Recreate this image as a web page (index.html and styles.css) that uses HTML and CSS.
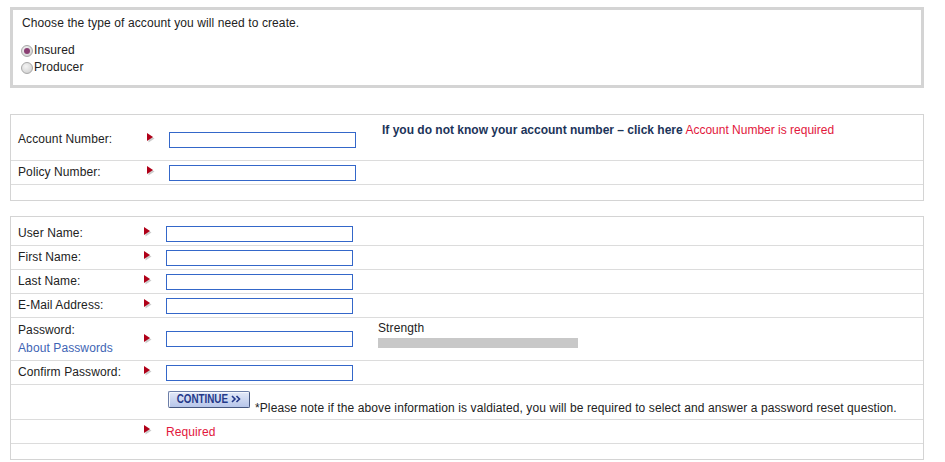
FILE: index.html
```html
<!DOCTYPE html>
<html>
<head>
<meta charset="utf-8">
<title>Create Account</title>
<link rel="stylesheet" href="styles.css">
</head>
<body>
<div class="page">
  <div class="type-box">
    <p class="prompt">Choose the type of account you will need to create.</p>
    <div class="radios">
      <label class="radio-row"><span class="radio checked"></span>Insured</label>
      <label class="radio-row"><span class="radio"></span>Producer</label>
    </div>
  </div>

  <div class="panel panel-account">
    <div class="row row-acct">
      <div class="label">Account Number:</div>
      <div class="req"><svg class="arrow" width="9" height="10" viewBox="0 0 9 10"><polygon points="1.5,1.5 7.5,5.5 1.5,9.5" fill="#cccccc"/><polygon points="0,0 6,4 0,8" fill="#b00018"/></svg></div>
      <div class="field"><input class="text-input" type="text"></div>
      <div class="hint"><b class="hint-strong">If you do not know your account number – click here</b> <span class="err">Account Number is required</span></div>
    </div>
    <div class="row">
      <div class="label">Policy Number:</div>
      <div class="req"><svg class="arrow" width="9" height="10" viewBox="0 0 9 10"><polygon points="1.5,1.5 7.5,5.5 1.5,9.5" fill="#cccccc"/><polygon points="0,0 6,4 0,8" fill="#b00018"/></svg></div>
      <div class="field"><input class="text-input" type="text"></div>
    </div>
    <div class="row row-empty"></div>
  </div>

  <div class="panel panel-user">
    <div class="row row-first">
      <div class="label">User Name:</div>
      <div class="req"><svg class="arrow" width="9" height="10" viewBox="0 0 9 10"><polygon points="1.5,1.5 7.5,5.5 1.5,9.5" fill="#cccccc"/><polygon points="0,0 6,4 0,8" fill="#b00018"/></svg></div>
      <div class="field"><input class="text-input" type="text"></div>
    </div>
    <div class="row">
      <div class="label">First Name:</div>
      <div class="req"><svg class="arrow" width="9" height="10" viewBox="0 0 9 10"><polygon points="1.5,1.5 7.5,5.5 1.5,9.5" fill="#cccccc"/><polygon points="0,0 6,4 0,8" fill="#b00018"/></svg></div>
      <div class="field"><input class="text-input" type="text"></div>
    </div>
    <div class="row">
      <div class="label">Last Name:</div>
      <div class="req"><svg class="arrow" width="9" height="10" viewBox="0 0 9 10"><polygon points="1.5,1.5 7.5,5.5 1.5,9.5" fill="#cccccc"/><polygon points="0,0 6,4 0,8" fill="#b00018"/></svg></div>
      <div class="field"><input class="text-input" type="text"></div>
    </div>
    <div class="row">
      <div class="label">E-Mail Address:</div>
      <div class="req"><svg class="arrow" width="9" height="10" viewBox="0 0 9 10"><polygon points="1.5,1.5 7.5,5.5 1.5,9.5" fill="#cccccc"/><polygon points="0,0 6,4 0,8" fill="#b00018"/></svg></div>
      <div class="field"><input class="text-input" type="text"></div>
    </div>
    <div class="row row-pass">
      <div class="label label-stack">
        <div class="label-line">Password:</div>
        <a class="about" href="#">About Passwords</a>
      </div>
      <div class="req"><svg class="arrow" width="9" height="10" viewBox="0 0 9 10"><polygon points="1.5,1.5 7.5,5.5 1.5,9.5" fill="#cccccc"/><polygon points="0,0 6,4 0,8" fill="#b00018"/></svg></div>
      <div class="field"><input class="text-input" type="password"></div>
      <div class="strength">
        <div class="strength-label">Strength</div>
        <div class="strength-bar"></div>
      </div>
    </div>
    <div class="row">
      <div class="label">Confirm Password:</div>
      <div class="req"><svg class="arrow" width="9" height="10" viewBox="0 0 9 10"><polygon points="1.5,1.5 7.5,5.5 1.5,9.5" fill="#cccccc"/><polygon points="0,0 6,4 0,8" fill="#b00018"/></svg></div>
      <div class="field"><input class="text-input" type="password"></div>
    </div>
    <div class="row row-continue">
      <div class="label"></div>
      <div class="req"></div>
      <button class="btn" type="button"><span class="btn-text">CONTINUE</span><svg class="chev" width="10" height="8" viewBox="0 0 10 8"><polyline points="1,1 4,4 1,7" fill="none" stroke="#24398a" stroke-width="1.6"/><polyline points="5.5,1 8.5,4 5.5,7" fill="none" stroke="#24398a" stroke-width="1.6"/></svg></button>
      <div class="note">*Please note if the above information is valdiated, you will be required to select and answer a password reset question.</div>
    </div>
    <div class="row">
      <div class="label"></div>
      <div class="req"><svg class="arrow" width="9" height="10" viewBox="0 0 9 10"><polygon points="1.5,1.5 7.5,5.5 1.5,9.5" fill="#cccccc"/><polygon points="0,0 6,4 0,8" fill="#b00018"/></svg></div>
      <div class="err req-text">Required</div>
    </div>
    <div class="row row-empty"></div>
  </div>
</div>
</body>
</html>
```
FILE: styles.css
```css
* { box-sizing: border-box; }

body {
  margin: 0;
  background: #ffffff;
  font-family: "Liberation Sans", Arial, sans-serif;
  font-size: 12px;
  letter-spacing: 0.1px;
  color: #222222;
}

.page {
  padding: 7px 0 0 10px;
  width: 924px;
}

.type-box {
  border: 3px solid #d4d4d4;
  height: 81px;
  padding: 6px 9px 0 8px;
}

.prompt {
  margin: 0;
  padding-left: 1px;
  line-height: 14px;
}

.radios {
  margin-top: 12px;
}

.radio-row {
  display: flex;
  align-items: center;
  height: 17px;
  line-height: 17px;
}

.radio {
  width: 12px;
  height: 12px;
  margin-right: 1px;
  border-radius: 50%;
  border: 1px solid #a8a8a8;
  background: radial-gradient(circle at 40% 35%, #f4f4f4 0%, #dcdcdc 60%, #c4c4c4 100%);
  display: flex;
  align-items: center;
  justify-content: center;
}

.radio.checked::after {
  content: "";
  width: 6px;
  height: 6px;
  border-radius: 50%;
  background: #8a3f73;
}

.panel {
  border: 1px solid #d4d4d4;
}

.panel-account {
  margin-top: 26px;
}

.panel-user {
  margin-top: 15px;
}

.row {
  display: flex;
  align-items: flex-start;
  border-top: 1px solid #dcdcdc;
  padding: 4px 0 0 7px;
  height: 24px;
}

.row:first-child {
  border-top: 0;
}

.label {
  width: 126px;
  line-height: 14px;
  height: 16px;
  flex-shrink: 0;
}

.panel-account .label {
  width: 129px;
}

.req {
  width: 22px;
  height: 16px;
  flex-shrink: 0;
}

.arrow {
  display: block;
  margin-top: 1px;
}

.text-input {
  display: block;
  width: 187px;
  height: 16px;
  margin: 0;
  padding: 0 2px;
  border: 1px solid #3467c9;
  background: #ffffff;
  font: inherit;
  outline: none;
}

.row-acct {
  height: 45px;
  padding-top: 17px;
}

.hint {
  margin: -10px 0 0 26px;
  line-height: 16px;
  letter-spacing: 0;
  white-space: nowrap;
}

.hint-strong {
  color: #1c3459;
  font-weight: bold;
}

.err {
  color: #e2173c;
}

.row-empty {
  height: 16px;
  padding: 0;
}

.row-first {
  height: 28px;
  padding-top: 9px;
}

.row-pass {
  height: 43px;
  padding-top: 0;
  align-items: center;
}

.label-stack {
  line-height: 18px;
  height: auto;
}

.label-line {
  height: 18px;
}

.about {
  display: block;
  color: #3e64b4;
  text-decoration: none;
}

.row-pass .arrow {
  margin-top: 3px;
}

.strength {
  align-self: flex-start;
  margin: 3px 0 0 25px;
}

.strength-label {
  line-height: 14px;
}

.strength-bar {
  width: 200px;
  height: 10px;
  margin-top: 3px;
  background: #c8c8c8;
}

.row-continue {
  height: 35px;
  padding-top: 6px;
}

.btn {
  width: 82px;
  height: 17px;
  margin: 0 0 0 2px;
  padding: 0 0 1px 0;
  border: 1px solid #6c7ea8;
  border-right-color: #45577f;
  border-bottom-color: #45577f;
  border-radius: 2px;
  background: linear-gradient(#e3e9f8, #b7c6ea);
  box-shadow: inset 1px 1px 0 #f6f8fd;
  display: flex;
  align-items: center;
  justify-content: center;
  gap: 3px;
  cursor: pointer;
}

.btn-text {
  display: inline-block;
  margin: 0 -6px;
  color: #24398a;
  font-family: "Liberation Sans", Arial, sans-serif;
  font-weight: bold;
  font-size: 12px;
  letter-spacing: 0;
  line-height: 13px;
  transform: scaleX(0.82);
  white-space: nowrap;
}

.chev {
  display: block;
  flex-shrink: 0;
}

.note {
  margin: 10px 0 0 5px;
  line-height: 14px;
  white-space: nowrap;
}

.req-text {
  line-height: 16px;
}
```
